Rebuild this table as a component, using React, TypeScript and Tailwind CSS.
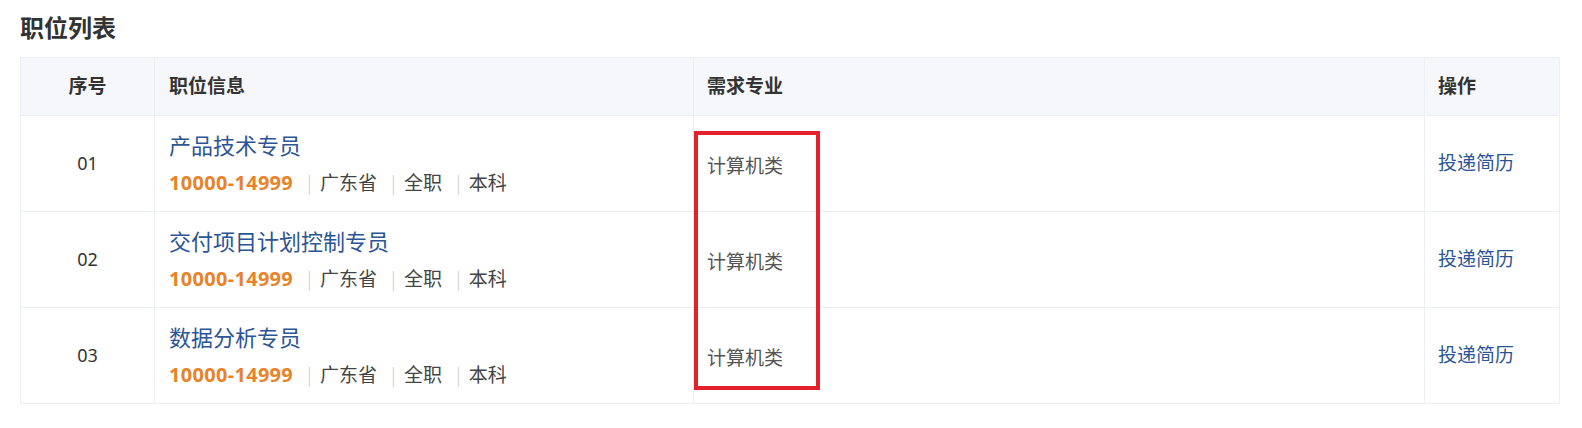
import React from "react";

type Job = {
    no: string;
    title: string;
    salary: string;
    place: string;
    kind: string;
    degree: string;
    major: string;
};

const jobs: Job[] = [
    {no: "01", title: "产品技术专员", salary: "10000-14999", place: "广东省", kind: "全职", degree: "本科", major: "计算机类"},
    {no: "02", title: "交付项目计划控制专员", salary: "10000-14999", place: "广东省", kind: "全职", degree: "本科", major: "计算机类"},
    {no: "03", title: "数据分析专员", salary: "10000-14999", place: "广东省", kind: "全职", degree: "本科", major: "计算机类"},
];

const font = "font-['Noto_Sans','Noto_Sans_CJK_SC',sans-serif]";

function Sep() {
    return <span className="ml-[11px] mr-[5px] text-[#cfcfcf] font-light text-[20px]">|</span>;
}

function JobRow({job}: {job: Job}) {
    return (
        <tr className="h-[96px] border-t border-[#ebeef5]">
            <td className="text-center text-[18px] text-[#333] border-r border-[#ebeef5]">{job.no}</td>
            <td className="px-[14px] border-r border-[#ebeef5]">
                <div className="text-[22px] leading-[28px] text-[#2c5596]">{job.title}</div>
                <div className="mt-[11px] flex items-center text-[19px] leading-[26px] text-[#444]">
                    <span className="font-bold text-[20px] tracking-[0.3px] text-[#e8832a]">{job.salary}</span>
                    <Sep />
                    <span>{job.place}</span>
                    <Sep />
                    <span>{job.kind}</span>
                    <Sep />
                    <span>{job.degree}</span>
                </div>
            </td>
            <td className="px-[13px] pt-[6px] text-[19px] text-[#555] border-r border-[#ebeef5]">{job.major}</td>
            <td className="px-[13px] text-[19px] text-[#2c5596]">投递简历</td>
        </tr>
    );
}

export default function App() {
    return (
        <div className={`${font} bg-white px-[20px] pt-[12px] pb-[25px] w-[1582px]`}>
            <h2 className="text-[24px] leading-[32px] font-bold text-[#333] mb-[13px]">职位列表</h2>
            <div className="relative w-[1539px]">
                <table className="w-full border-collapse border border-[#ebeef5] table-fixed">
                    <colgroup>
                        <col className="w-[134px]" />
                        <col className="w-[539px]" />
                        <col className="w-[731px]" />
                        <col className="w-[135px]" />
                    </colgroup>
                    <thead>
                        <tr className="h-[58px] bg-[#f5f7fa] text-[19px] font-bold text-[#333]">
                            <th className="text-center border-r border-[#ebeef5]">序号</th>
                            <th className="text-left px-[14px] border-r border-[#ebeef5]">职位信息</th>
                            <th className="text-left px-[13px] border-r border-[#ebeef5]">需求专业</th>
                            <th className="text-left px-[13px]">操作</th>
                        </tr>
                    </thead>
                    <tbody>
                        {jobs.map((job) => <JobRow key={job.no} job={job} />)}
                    </tbody>
                </table>
                {/* highlight box over the major column */}
                <div className="absolute left-[674px] top-[74px] w-[126px] h-[259px] border-[4px] border-[#e3202b] pointer-events-none" />
            </div>
        </div>
    );
}
